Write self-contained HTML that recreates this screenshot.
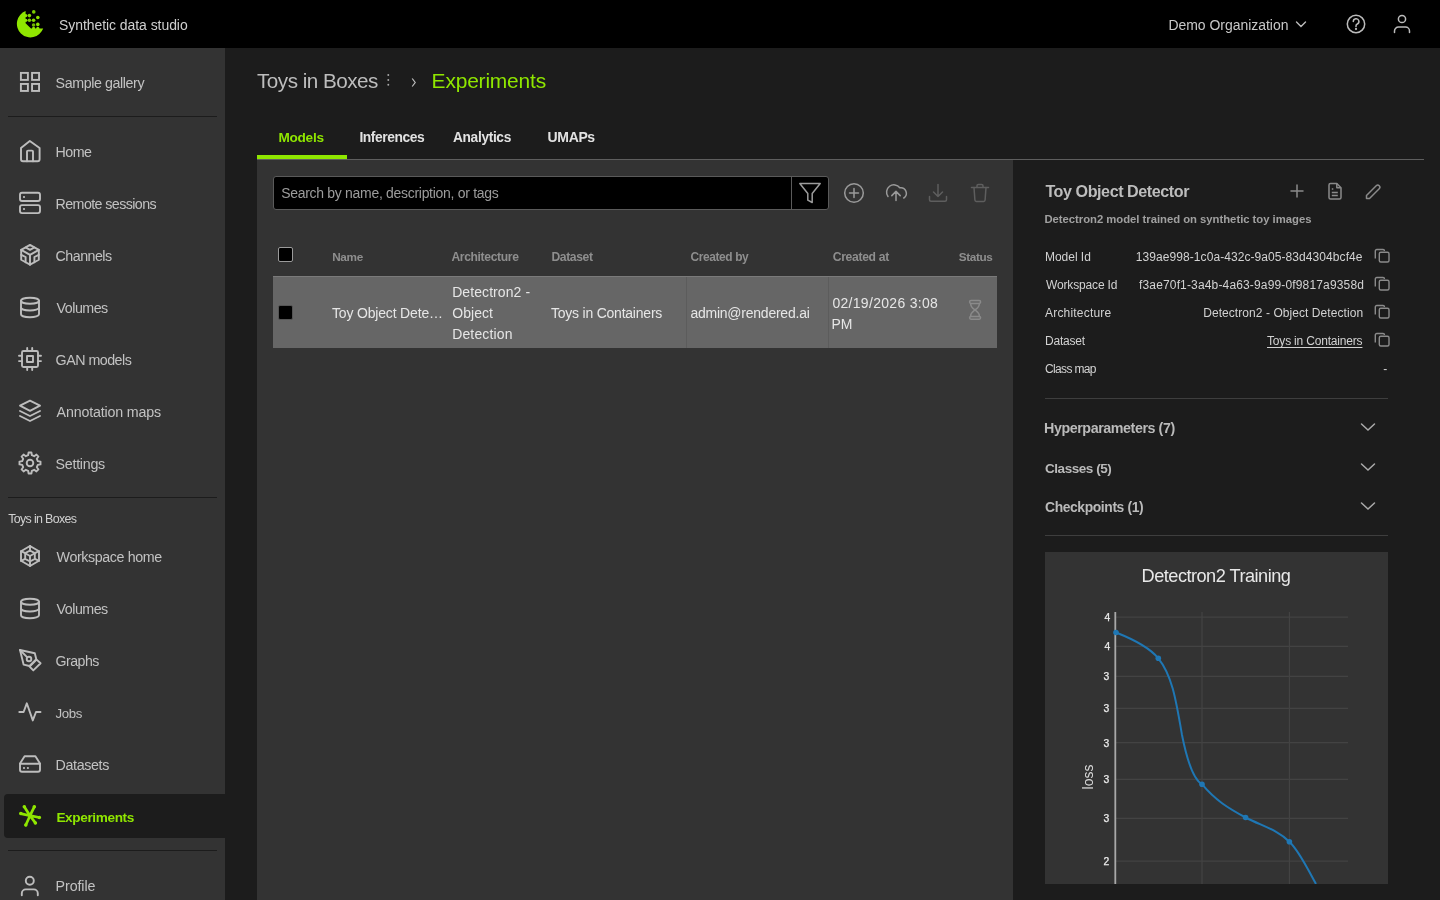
<!DOCTYPE html>
<html><head><meta charset="utf-8">
<style>
*{box-sizing:border-box;margin:0;padding:0}
html,body{width:1440px;height:900px;overflow:hidden;background:#1c1c1c;font-family:"Liberation Sans",sans-serif;color:#c8c8c8}
body{will-change:transform;-webkit-font-smoothing:antialiased;position:relative}
.abs{position:absolute}
.t{position:absolute;white-space:nowrap}
.ic{position:absolute;fill:none;stroke:#bdbdbd;stroke-width:1.9;stroke-linecap:round;stroke-linejoin:round}
</style></head><body>

<div class="abs" style="left:0;top:0;width:1440px;height:48px;background:#000"></div>
<svg class="abs" style="left:0;top:0" width="48" height="48" viewBox="0 0 48 48">
<path fill="#8fe600" d="M25.6 11.1 A13.6 13.6 0 1 0 43.2 28.6 L31 28.6 L25.6 23.2 Z"/>
<circle cx="25.8" cy="15.6" r="1.6" fill="#8fe600"/><circle cx="25.8" cy="20.3" r="1.6" fill="#8fe600"/>
<circle cx="33.6" cy="28.4" r="1.6" fill="#8fe600"/><circle cx="37.8" cy="28.4" r="1.6" fill="#8fe600"/>
<circle cx="33.75" cy="11.9" r="1.8" fill="#7ccc00"/><circle cx="29.4" cy="15.6" r="1.8" fill="#86d800"/>
<circle cx="37.8" cy="17.5" r="1.8" fill="#8ae000"/><circle cx="29.4" cy="20.3" r="1.8" fill="#7ccc00"/>
<circle cx="33.6" cy="20.3" r="1.8" fill="#86d800"/><circle cx="33.6" cy="25" r="1.8" fill="#70b800"/>
<circle cx="37.8" cy="24.4" r="1.8" fill="#8ae000"/></svg>
<div class="t" style="left:59.00px;top:18px;font-size:13.97px;line-height:15.60px;color:#cfcfcf;letter-spacing:-0.050px;">Synthetic data studio</div>
<div class="t" style="left:1168.40px;top:18px;font-size:13.97px;line-height:15.60px;color:#c8c8c8;letter-spacing:-0.019px;">Demo Organization</div>
<svg class="abs" style="left:1294px;top:17px" width="14" height="14" viewBox="0 0 14 14"><path d="M2.5 5 L7 9.5 L11.5 5" fill="none" stroke="#bbb" stroke-width="1.4" stroke-linecap="round"/></svg>
<svg class="abs" style="left:1344px;top:12px" width="24" height="24" viewBox="0 0 24 24" fill="none" stroke="#bbb" stroke-width="1.5" stroke-linecap="round"><circle cx="12" cy="12" r="8.7"/><path d="M9.3 9.5a2.8 2.8 0 1 1 4 2.5c-.9.4-1.3 1-1.3 2v.5"/><circle cx="12" cy="17" r=".4" fill="#bbb"/></svg>
<svg class="abs" style="left:1390px;top:12px" width="24" height="24" viewBox="0 0 24 24" fill="none" stroke="#bbb" stroke-width="1.5" stroke-linecap="round"><circle cx="12" cy="7" r="3.6"/><path d="M4.5 20.5v-1.5a4 4 0 0 1 4 -4h7a4 4 0 0 1 4 4v1.5"/></svg>
<div class="abs" style="left:0;top:48px;width:225px;height:852px;background:#333"></div>
<div class="abs" style="left:4px;top:794px;width:221px;height:44px;background:#1c1c1c;border-radius:4px 0 0 4px"></div>
<svg class="ic" style="left:14px;top:66px" width="32" height="32" viewBox="0 0 32 32"><g stroke-linejoin="miter"><rect x="6.9" y="6.9" width="7" height="7"/><rect x="18.05" y="6.9" width="7" height="7"/><rect x="6.9" y="17.95" width="7" height="7"/><rect x="18.05" y="17.95" width="7" height="7"/></g></svg>
<div class="t" style="left:55.60px;top:76px;font-size:14.25px;line-height:15.92px;color:#c2c2c2;letter-spacing:-0.408px;">Sample gallery</div>
<svg class="ic" style="left:14px;top:135px" width="32" height="32" viewBox="0 0 32 32"><path d="M7 24.3V13L15.8 6L25.6 13V24.3a2 2 0 0 1 -2 2H9a2 2 0 0 1 -2 -2Z"/><path d="M13 26.3V16.6a1 1 0 0 1 1 -1H18a1 1 0 0 1 1 1V26.3"/></svg>
<div class="t" style="left:55.60px;top:145px;font-size:14.25px;line-height:15.92px;color:#c2c2c2;letter-spacing:-0.533px;">Home</div>
<svg class="ic" style="left:14px;top:187px" width="32" height="32" viewBox="0 0 32 32"><rect x="6" y="5.8" width="20" height="8.2" rx="2"/><rect x="6" y="18.1" width="20" height="8" rx="2"/><path d="M10 10h.01M10 22h.01" stroke-width="2.2"/></svg>
<div class="t" style="left:55.60px;top:197px;font-size:14.25px;line-height:15.92px;color:#c2c2c2;letter-spacing:-0.593px;">Remote sessions</div>
<svg class="ic" style="left:14px;top:239px" width="32" height="32" viewBox="0 0 32 32"><g transform="translate(2.8,2.6) scale(1.1)" stroke-width="1.73"><path d="M20 7.5v9l-4 2.25l-4 2.25l-4 -2.25l-4 -2.25v-9l4 -2.25l4 -2.25l4 2.25z" /><path d="M12 12l4 -2.25l4 -2.25" /><path d="M12 12l0 9" /><path d="M12 12l-4 -2.25l-4 -2.25" /><path d="M20 12l-4 2v4.75" /><path d="M4 12l4 2l0 4.75" /><path d="M8 5.25l4 2.25l4 -2.25" /></g></svg>
<div class="t" style="left:55.60px;top:249px;font-size:14.25px;line-height:15.92px;color:#c2c2c2;letter-spacing:-0.529px;">Channels</div>
<svg class="ic" style="left:14px;top:291px" width="32" height="32" viewBox="0 0 32 32"><ellipse cx="16" cy="9.7" rx="9" ry="3"/><path d="M7 9.7v6.8a9 3 0 0 0 18 0v-6.8"/><path d="M7 16.5v6.8a9 3 0 0 0 18 0v-6.8"/></svg>
<div class="t" style="left:56.60px;top:301px;font-size:14.25px;line-height:15.92px;color:#c2c2c2;letter-spacing:-0.500px;">Volumes</div>
<svg class="ic" style="left:14px;top:343px" width="32" height="32" viewBox="0 0 32 32"><rect x="8" y="8" width="16" height="16" rx="1.5"/><rect x="13" y="13" width="6" height="6"/><path d="M13.2 5v3M18.2 5v3M13.2 24v3M18.2 24v3M5 12.8h3M5 18.1h3M24 12.8h3M24 18.1h3"/></svg>
<div class="t" style="left:55.60px;top:353px;font-size:14.25px;line-height:15.92px;color:#c2c2c2;letter-spacing:-0.511px;">GAN models</div>
<svg class="ic" style="left:14px;top:395px" width="32" height="32" viewBox="0 0 32 32"><path d="M6 10.7L16 5.6L26 10.7L16 15.8Z"/><path d="M6 16L16 21L26 16"/><path d="M6 21L16 26L26 21"/></svg>
<div class="t" style="left:56.60px;top:405px;font-size:14.25px;line-height:15.92px;color:#c2c2c2;letter-spacing:-0.171px;">Annotation maps</div>
<svg class="ic" style="left:14px;top:447px" width="32" height="32" viewBox="0 0 32 32"><path d="M14.59 5.49 L17.41 5.49 L17.87 8.22 L20.18 9.18 L22.43 7.57 L24.43 9.57 L22.82 11.82 L23.78 14.13 L26.51 14.59 L26.51 17.41 L23.78 17.87 L22.82 20.18 L24.43 22.43 L22.43 24.43 L20.18 22.82 L17.87 23.78 L17.41 26.51 L14.59 26.51 L14.13 23.78 L11.82 22.82 L9.57 24.43 L7.57 22.43 L9.18 20.18 L8.22 17.87 L5.49 17.41 L5.49 14.59 L8.22 14.13 L9.18 11.82 L7.57 9.57 L9.57 7.57 L11.82 9.18 L14.13 8.22Z"/><circle cx="16" cy="16" r="3.3"/></svg>
<div class="t" style="left:55.60px;top:457px;font-size:14.25px;line-height:15.92px;color:#c2c2c2;letter-spacing:-0.271px;">Settings</div>
<svg class="ic" style="left:14px;top:540px" width="32" height="32" viewBox="0 0 32 32"><path d="M16 6L25 11.2V20.8L16 26L7 20.8V11.2Z"/><path d="M16 10.5L20.8 13.2V18.8L16 21.5L11.2 18.8V13.2Z"/><path d="M16 6V10.5M25 11.2L20.8 13.2M25 20.8L20.8 18.8M16 26V21.5M7 20.8L11.2 18.8M7 11.2L11.2 13.2M16 16V21.5M16 16L11.2 13.2M16 16L20.8 13.2"/></svg>
<div class="t" style="left:56.60px;top:550px;font-size:14.25px;line-height:15.92px;color:#c2c2c2;letter-spacing:-0.385px;">Workspace home</div>
<svg class="ic" style="left:14px;top:592px" width="32" height="32" viewBox="0 0 32 32"><ellipse cx="16" cy="9.7" rx="9" ry="3"/><path d="M7 9.7v6.8a9 3 0 0 0 18 0v-6.8"/><path d="M7 16.5v6.8a9 3 0 0 0 18 0v-6.8"/></svg>
<div class="t" style="left:56.60px;top:602px;font-size:14.25px;line-height:15.92px;color:#c2c2c2;letter-spacing:-0.500px;">Volumes</div>
<svg class="ic" style="left:14px;top:644px" width="32" height="32" viewBox="0 0 32 32"><path d="M6 6L20.8 9.2L22.3 15.2L15.5 22L9.6 20.6Z"/><path d="M22.6 15.6L26.6 19.2L19.3 26.4L15.6 22.6Z"/><circle cx="15" cy="15" r="2.3"/><path d="M6 6L13.3 13.3"/></svg>
<div class="t" style="left:55.60px;top:654px;font-size:14.15px;line-height:15.81px;color:#c2c2c2;letter-spacing:-0.520px;">Graphs</div>
<svg class="ic" style="left:14px;top:696px" width="32" height="32" viewBox="0 0 32 32"><path d="M5.3 16H9.6L12.8 7.3L18.8 24.4L22 16H26.5"/></svg>
<div class="t" style="left:55.60px;top:707px;font-size:13.25px;line-height:14.80px;color:#c2c2c2;letter-spacing:-0.433px;">Jobs</div>
<svg class="ic" style="left:14px;top:748px" width="32" height="32" viewBox="0 0 32 32"><path d="M6 15.5L10.6 8.2H21.4L26 15.5"/><path d="M6 15.8H26V21.7a2 2 0 0 1 -2 2H8a2 2 0 0 1 -2 -2Z"/><path d="M10 20h.01M13.9 20h.01" stroke-width="2.2"/></svg>
<div class="t" style="left:55.60px;top:758px;font-size:14.25px;line-height:15.92px;color:#c2c2c2;letter-spacing:-0.357px;">Datasets</div>
<svg class="ic" style="left:14px;top:869px" width="32" height="32" viewBox="0 0 32 32"><circle cx="15.8" cy="11.7" r="4"/><path d="M7.8 26.2v-1.8a4 4 0 0 1 4 -4h8a4 4 0 0 1 4 4v1.8"/></svg>
<div class="t" style="left:55.60px;top:879px;font-size:14.25px;line-height:15.92px;color:#c2c2c2;letter-spacing:-0.100px;">Profile</div>
<svg class="ic" style="left:14px;top:800px;stroke:#8fe600;stroke-width:2.7" width="32" height="32" viewBox="0 0 32 32"><path d="M16 15.7L10.3 6.8M16 15.7L20.3 6.8M16 15.7L6.8 13.6M16 15.7L25.3 17.5M16 15.7L11.8 25M16 15.7L21.4 22.9"/><circle cx="10.3" cy="6.8" r="1.75" fill="#8fe600" stroke="none"/><circle cx="20.3" cy="6.8" r="1.75" fill="#8fe600" stroke="none"/><circle cx="6.8" cy="13.6" r="1.75" fill="#8fe600" stroke="none"/><circle cx="25.3" cy="17.5" r="1.75" fill="#8fe600" stroke="none"/><circle cx="11.8" cy="25.0" r="1.75" fill="#8fe600" stroke="none"/><circle cx="21.4" cy="22.9" r="1.75" fill="#8fe600" stroke="none"/></svg>
<div class="t" style="left:56.40px;top:810px;font-size:13.60px;line-height:15.19px;color:#8fe600;letter-spacing:-0.370px;font-weight:bold;">Experiments</div>
<div class="abs" style="left:8px;top:116px;width:209px;height:1px;background:#1c1c1c"></div>
<div class="abs" style="left:8px;top:497px;width:209px;height:1px;background:#1c1c1c"></div>
<div class="abs" style="left:8px;top:850px;width:209px;height:1px;background:#1c1c1c"></div>
<div class="t" style="left:8.20px;top:513px;font-size:12.45px;line-height:13.91px;color:#d0d0d0;letter-spacing:-0.667px;">Toys in Boxes</div>
<div class="t" style="left:257.00px;top:69px;font-size:20.67px;line-height:23.09px;color:#bdbdbd;letter-spacing:-0.500px;">Toys in Boxes</div>
<svg class="abs" style="left:383px;top:70px" width="12" height="20" viewBox="383 70 12 20"><circle cx="388.3" cy="75" r="0.95" fill="#a8a8a8"/><circle cx="388.3" cy="80" r="0.95" fill="#a8a8a8"/><circle cx="388.3" cy="84.7" r="0.95" fill="#a8a8a8"/></svg>
<svg class="abs" style="left:408px;top:74px" width="12" height="16" viewBox="0 0 12 16"><path d="M4.2 4.5L7.2 8.5L4.2 12.5" fill="none" stroke="#c0c0c0" stroke-width="1.2"/></svg>
<div class="t" style="left:431.60px;top:69px;font-size:20.95px;line-height:23.40px;color:#8fe600;letter-spacing:-0.180px;">Experiments</div>
<div class="t" style="left:278.40px;top:130px;font-size:13.63px;line-height:15.22px;color:#8fe600;letter-spacing:-0.260px;font-weight:bold;">Models</div>
<div class="t" style="left:359.40px;top:130px;font-size:13.83px;line-height:15.45px;color:#e2e2e2;letter-spacing:-0.444px;font-weight:bold;">Inferences</div>
<div class="t" style="left:453.00px;top:130px;font-size:13.73px;line-height:15.34px;color:#e2e2e2;letter-spacing:-0.338px;font-weight:bold;">Analytics</div>
<div class="t" style="left:547.60px;top:130px;font-size:14.03px;line-height:15.67px;color:#e2e2e2;letter-spacing:-0.375px;font-weight:bold;">UMAPs</div>
<div class="abs" style="left:257px;top:155px;width:90px;height:4px;background:#8fe600"></div>
<div class="abs" style="left:257px;top:159px;width:1167px;height:1px;background:#5e5e5e"></div>
<div class="abs" style="left:257px;top:160px;width:756px;height:740px;background:#333"></div>
<div class="abs" style="left:273px;top:176px;width:556px;height:34px;background:#000;border:1px solid #5a5a5a;border-radius:3px"></div>
<div class="abs" style="left:791px;top:177px;width:1px;height:32px;background:#5a5a5a"></div>
<div class="t" style="left:281.20px;top:186px;font-size:13.97px;line-height:15.60px;color:#9c9c9c;letter-spacing:-0.286px;">Search by name, description, or tags</div>
<svg class="abs" style="left:797px;top:180px" width="26" height="26" viewBox="0 0 26 26" fill="none" stroke="#9c9c9c" stroke-width="1.5" stroke-linejoin="round"><path d="M2.8 3.5H23.2L15.2 13.5V22.5L10.8 20.2V13.5Z"/></svg>
<svg class="abs" style="left:842px;top:181px" width="24" height="24" viewBox="0 0 24 24" fill="none" stroke-width="1.5" stroke-linecap="round" stroke-linejoin="round" stroke="#9a9a9a"><circle cx="12" cy="12" r="9.3"/><path d="M12 7.5v9M7.5 12h9"/></svg>
<svg class="abs" style="left:880px;top:177px" width="30" height="30" viewBox="0 0 30 30" fill="none" stroke-width="1.5" stroke-linecap="round" stroke-linejoin="round" stroke="#9a9a9a"><path d="M8 19.5A7.3 7.3 0 1 1 19.8 10.8A5.6 5.6 0 0 1 23.8 21"/><path d="M16 23.5V14.6M11.8 18.6L16 14.4L20.2 18.6"/></svg>
<svg class="abs" style="left:926px;top:181px" width="24" height="24" viewBox="0 0 24 24" fill="none" stroke-width="1.5" stroke-linecap="round" stroke-linejoin="round" stroke="#5e5e5e"><path d="M3.5 15.5v3.2a1.5 1.5 0 0 0 1.5 1.5h14a1.5 1.5 0 0 0 1.5 -1.5v-3.2"/><path d="M12 3.5v12M7.5 11l4.5 4.5l4.5 -4.5"/></svg>
<svg class="abs" style="left:968px;top:181px" width="24" height="24" viewBox="0 0 24 24" fill="none" stroke-width="1.5" stroke-linecap="round" stroke-linejoin="round" stroke="#5e5e5e"><path d="M3.5 6.5h17"/><path d="M6 6.5l.9 12.5a1.5 1.5 0 0 0 1.5 1.4h7.2a1.5 1.5 0 0 0 1.5 -1.4l.9 -12.5"/><path d="M9 6.5V4.8a1.3 1.3 0 0 1 1.3 -1.3h3.4a1.3 1.3 0 0 1 1.3 1.3V6.5"/></svg>
<div class="abs" style="left:278px;top:247px;width:15px;height:15px;background:#000;border:1px solid #9a9a9a;border-radius:2px"></div>
<div class="t" style="left:332.20px;top:250px;font-size:11.75px;line-height:13.12px;color:#8e8e8e;letter-spacing:-0.333px;font-weight:bold;">Name</div>
<div class="t" style="left:451.40px;top:251px;font-size:12.15px;line-height:13.57px;color:#8e8e8e;letter-spacing:-0.364px;font-weight:bold;">Architecture</div>
<div class="t" style="left:551.40px;top:251px;font-size:12.15px;line-height:13.57px;color:#8e8e8e;letter-spacing:-0.367px;font-weight:bold;">Dataset</div>
<div class="t" style="left:690.40px;top:251px;font-size:11.95px;line-height:13.35px;color:#8e8e8e;letter-spacing:-0.378px;font-weight:bold;">Created by</div>
<div class="t" style="left:832.80px;top:251px;font-size:12.15px;line-height:13.57px;color:#8e8e8e;letter-spacing:-0.333px;font-weight:bold;">Created at</div>
<div class="t" style="left:958.80px;top:250px;font-size:11.75px;line-height:13.12px;color:#8e8e8e;letter-spacing:-0.400px;font-weight:bold;">Status</div>
<div class="abs" style="left:273px;top:276px;width:724px;height:72px;background:#666;border-top:1px solid #7a7a7a"></div>
<div class="abs" style="left:686px;top:277px;width:1px;height:71px;background:#5c5c5c"></div>
<div class="abs" style="left:828px;top:277px;width:1px;height:71px;background:#5c5c5c"></div>
<div class="abs" style="left:278px;top:305px;width:15px;height:15px;background:#000;border:1px solid #555;border-radius:2px"></div>
<div class="t" style="left:332.00px;top:306px;font-size:13.97px;line-height:15.60px;color:#e6e6e6;letter-spacing:-0.159px;">Toy Object Dete&hellip;</div>
<div class="t" style="left:452.20px;top:285px;font-size:13.97px;line-height:15.60px;color:#e6e6e6;letter-spacing:0.091px;">Detectron2 -</div>
<div class="t" style="left:452.20px;top:306px;font-size:13.97px;line-height:15.60px;color:#e6e6e6;letter-spacing:0.080px;">Object</div>
<div class="t" style="left:452.20px;top:327px;font-size:13.97px;line-height:15.60px;color:#e6e6e6;letter-spacing:0.162px;">Detection</div>
<div class="t" style="left:551.00px;top:306px;font-size:13.97px;line-height:15.60px;color:#e6e6e6;letter-spacing:-0.212px;">Toys in Containers</div>
<div class="t" style="left:690.40px;top:306px;font-size:13.97px;line-height:15.60px;color:#e6e6e6;letter-spacing:-0.219px;">admin@rendered.ai</div>
<div class="t" style="left:832.40px;top:296px;font-size:13.97px;line-height:15.60px;color:#e6e6e6;letter-spacing:0.321px;">02/19/2026 3:08</div>
<div class="t" style="left:831.40px;top:317px;font-size:13.97px;line-height:15.60px;color:#e6e6e6;">PM</div>
<svg class="abs" style="left:960px;top:295px" width="30" height="30" viewBox="0 0 30 30" fill="none" stroke="#8a8a8a" stroke-width="1.5" stroke-linecap="round"><rect x="9.6" y="5.6" width="11" height="2.8" rx="1.4"/><rect x="9.6" y="21.4" width="11" height="2.8" rx="1.4"/><path d="M10.6 8.4C10.6 12 13 13.5 15 15C17 13.5 19.4 12 19.4 8.4"/><path d="M10.6 21.4C10.6 17.5 13 16.5 15 15C17 16.5 19.4 17.5 19.4 21.4"/></svg>
<div class="t" style="left:1045.40px;top:182px;font-size:16.14px;line-height:18.03px;color:#bdbdbd;letter-spacing:-0.444px;font-weight:bold;">Toy Object Detector</div>
<svg class="abs" style="left:1287px;top:181px" width="20" height="20" viewBox="0 0 20 20" fill="none" stroke="#8a8a8a" stroke-width="1.5" stroke-linecap="round"><path d="M10 4v12M4 10h12"/></svg>
<svg class="abs" style="left:1325px;top:181px" width="20" height="20" viewBox="0 0 20 20" fill="none" stroke="#8a8a8a" stroke-width="1.5" stroke-linejoin="round"><path d="M11.8 2.5H5.5a1.5 1.5 0 0 0 -1.5 1.5V16.5a1.5 1.5 0 0 0 1.5 1.5H14.5a1.5 1.5 0 0 0 1.5 -1.5V6.8Z"/><path d="M11.8 2.5V6.8H16" /><path d="M6.8 8h1.5M6.8 11.5h6M6.8 14.5h6"/></svg>
<svg class="abs" style="left:1362px;top:181px" width="20" height="20" viewBox="0 0 20 20" fill="none" stroke="#8a8a8a" stroke-width="1.5" stroke-linejoin="round"><path d="M4.5 17.5H7.5L17.2 7.8a2.1 2.1 0 0 0 -3 -3L4.5 14.5Z"/></svg>
<div class="t" style="left:1044.40px;top:213px;font-size:11.31px;line-height:12.63px;color:#a0a0a0;letter-spacing:-0.021px;font-weight:bold;">Detectron2 model trained on synthetic toy images</div>
<div class="t" style="left:1045.00px;top:251px;font-size:12.01px;line-height:13.42px;color:#d2d2d2;letter-spacing:-0.029px;">Model Id</div>
<div class="t" style="left:1135.80px;top:251px;font-size:12.01px;line-height:13.42px;color:#d2d2d2;letter-spacing:0.071px;">139ae998-1c0a-432c-9a05-83d4304bcf4e</div>
<svg class="abs" style="left:1373px;top:246.5px" width="18" height="18" viewBox="0 0 18 18" fill="none" stroke="#8a8a8a" stroke-width="1.4" stroke-linejoin="round"><rect x="6.3" y="5.3" width="9.7" height="9.7" rx="1.5"/><path d="M2.3 11.5V4a1.5 1.5 0 0 1 1.5 -1.5H10a1.5 1.5 0 0 1 1.5 1.5"/></svg>
<div class="t" style="left:1046.00px;top:279px;font-size:12.01px;line-height:13.42px;color:#d2d2d2;letter-spacing:-0.155px;">Workspace Id</div>
<div class="t" style="left:1139.00px;top:279px;font-size:12.01px;line-height:13.42px;color:#d2d2d2;letter-spacing:0.154px;">f3ae70f1-3a4b-4a63-9a99-0f9817a9358d</div>
<svg class="abs" style="left:1373px;top:274.8px" width="18" height="18" viewBox="0 0 18 18" fill="none" stroke="#8a8a8a" stroke-width="1.4" stroke-linejoin="round"><rect x="6.3" y="5.3" width="9.7" height="9.7" rx="1.5"/><path d="M2.3 11.5V4a1.5 1.5 0 0 1 1.5 -1.5H10a1.5 1.5 0 0 1 1.5 1.5"/></svg>
<div class="t" style="left:1045.00px;top:307px;font-size:12.01px;line-height:13.42px;color:#d2d2d2;letter-spacing:0.200px;">Architecture</div>
<div class="t" style="left:1203.20px;top:307px;font-size:12.01px;line-height:13.42px;color:#d2d2d2;letter-spacing:0.064px;">Detectron2 - Object Detection</div>
<svg class="abs" style="left:1373px;top:302.8px" width="18" height="18" viewBox="0 0 18 18" fill="none" stroke="#8a8a8a" stroke-width="1.4" stroke-linejoin="round"><rect x="6.3" y="5.3" width="9.7" height="9.7" rx="1.5"/><path d="M2.3 11.5V4a1.5 1.5 0 0 1 1.5 -1.5H10a1.5 1.5 0 0 1 1.5 1.5"/></svg>
<div class="t" style="left:1045.00px;top:335px;font-size:12.01px;line-height:13.42px;color:#d2d2d2;letter-spacing:-0.217px;">Dataset</div>
<div class="t" style="left:1267.00px;top:335px;font-size:12.01px;line-height:13.42px;color:#d2d2d2;letter-spacing:-0.182px;text-decoration:underline;text-underline-offset:2px">Toys in Containers</div>
<svg class="abs" style="left:1373px;top:330.9px" width="18" height="18" viewBox="0 0 18 18" fill="none" stroke="#8a8a8a" stroke-width="1.4" stroke-linejoin="round"><rect x="6.3" y="5.3" width="9.7" height="9.7" rx="1.5"/><path d="M2.3 11.5V4a1.5 1.5 0 0 1 1.5 -1.5H10a1.5 1.5 0 0 1 1.5 1.5"/></svg>
<div class="t" style="left:1045.00px;top:363px;font-size:12.01px;line-height:13.42px;color:#d2d2d2;letter-spacing:-0.650px;">Class map</div>
<div class="t" style="left:1383.20px;top:363px;font-size:12.01px;line-height:13.42px;color:#d2d2d2;">-</div>
<div class="abs" style="left:1045px;top:398px;width:343px;height:1px;background:#3e3e3e"></div>
<div class="t" style="left:1044.00px;top:421px;font-size:14.29px;line-height:15.96px;color:#bababa;letter-spacing:-0.428px;font-weight:bold;">Hyperparameters (7)</div>
<svg class="abs" style="left:1360px;top:421.9px" width="16" height="10" viewBox="0 0 16 10" fill="none" stroke="#aaa" stroke-width="1.5" stroke-linecap="round"><path d="M1.5 2L8 8L14.5 2"/></svg>
<div class="t" style="left:1045.00px;top:461px;font-size:13.49px;line-height:15.07px;color:#bababa;letter-spacing:-0.450px;font-weight:bold;">Classes (5)</div>
<svg class="abs" style="left:1360px;top:462.0px" width="16" height="10" viewBox="0 0 16 10" fill="none" stroke="#aaa" stroke-width="1.5" stroke-linecap="round"><path d="M1.5 2L8 8L14.5 2"/></svg>
<div class="t" style="left:1045.00px;top:500px;font-size:13.89px;line-height:15.52px;color:#bababa;letter-spacing:-0.393px;font-weight:bold;">Checkpoints (1)</div>
<svg class="abs" style="left:1360px;top:501.4px" width="16" height="10" viewBox="0 0 16 10" fill="none" stroke="#aaa" stroke-width="1.5" stroke-linecap="round"><path d="M1.5 2L8 8L14.5 2"/></svg>
<div class="abs" style="left:1045px;top:535px;width:343px;height:1px;background:#3e3e3e"></div>
<div class="abs" style="left:1045px;top:552px;width:343px;height:332px;background:#333"></div>
<div class="t" style="left:1141.60px;top:566px;font-size:18.16px;line-height:20.28px;color:#e8e8e8;letter-spacing:-0.511px;">Detectron2 Training</div>
<svg class="abs" style="left:1045px;top:552px" width="343" height="332" viewBox="1045 552 343 332"><line x1="1115" y1="617.2" x2="1348" y2="617.2" stroke="#434343" stroke-width="1.2"/><line x1="1115" y1="646.3" x2="1348" y2="646.3" stroke="#434343" stroke-width="1.2"/><line x1="1115" y1="676.3" x2="1348" y2="676.3" stroke="#434343" stroke-width="1.2"/><line x1="1115" y1="708.3" x2="1348" y2="708.3" stroke="#434343" stroke-width="1.2"/><line x1="1115" y1="742.6" x2="1348" y2="742.6" stroke="#434343" stroke-width="1.2"/><line x1="1115" y1="779.4" x2="1348" y2="779.4" stroke="#434343" stroke-width="1.2"/><line x1="1115" y1="818.3" x2="1348" y2="818.3" stroke="#434343" stroke-width="1.2"/><line x1="1115" y1="861.2" x2="1348" y2="861.2" stroke="#434343" stroke-width="1.2"/><line x1="1202.0" y1="612" x2="1202.0" y2="884" stroke="#434343" stroke-width="1.2"/><line x1="1289.4" y1="612" x2="1289.4" y2="884" stroke="#434343" stroke-width="1.2"/><line x1="1115.3" y1="612" x2="1115.3" y2="884" stroke="#a8a8a8" stroke-width="1.8"/><path d="M1116 632.5 C1135 640 1150 648 1158.3 658.3 C1172 675 1176 700 1182 735 C1188 765 1194 780 1202 784.2 C1215 800 1228 808 1245.6 817.5 C1262 826 1278 830 1289.4 841.7 C1300 852 1308 870 1316 884" fill="none" stroke="#1f77b4" stroke-width="2"/><circle cx="1116.0" cy="632.5" r="2.8" fill="#1f77b4"/><circle cx="1158.3" cy="658.3" r="2.8" fill="#1f77b4"/><circle cx="1202.0" cy="784.2" r="2.8" fill="#1f77b4"/><circle cx="1245.6" cy="817.5" r="2.8" fill="#1f77b4"/><circle cx="1289.4" cy="841.7" r="2.8" fill="#1f77b4"/></svg>
<div class="t" style="left:1104.60px;top:612px;font-size:10.34px;line-height:11.55px;color:#ececec;-webkit-text-stroke:0.25px #ececec">4</div>
<div class="t" style="left:1104.60px;top:641px;font-size:10.34px;line-height:11.55px;color:#ececec;-webkit-text-stroke:0.25px #ececec">4</div>
<div class="t" style="left:1103.60px;top:671px;font-size:10.34px;line-height:11.55px;color:#ececec;-webkit-text-stroke:0.25px #ececec">3</div>
<div class="t" style="left:1103.60px;top:703px;font-size:10.34px;line-height:11.55px;color:#ececec;-webkit-text-stroke:0.25px #ececec">3</div>
<div class="t" style="left:1103.60px;top:738px;font-size:10.34px;line-height:11.55px;color:#ececec;-webkit-text-stroke:0.25px #ececec">3</div>
<div class="t" style="left:1103.60px;top:774px;font-size:10.34px;line-height:11.55px;color:#ececec;-webkit-text-stroke:0.25px #ececec">3</div>
<div class="t" style="left:1103.60px;top:813px;font-size:10.34px;line-height:11.55px;color:#ececec;-webkit-text-stroke:0.25px #ececec">3</div>
<div class="t" style="left:1103.60px;top:856px;font-size:10.34px;line-height:11.55px;color:#ececec;-webkit-text-stroke:0.25px #ececec">2</div>
<div class="t" style="left:1067.5px;top:769px;width:40px;height:16px;font-size:14px;line-height:16px;text-align:center;color:#d8d8d8;transform:rotate(-90deg)">loss</div>
</body></html>
